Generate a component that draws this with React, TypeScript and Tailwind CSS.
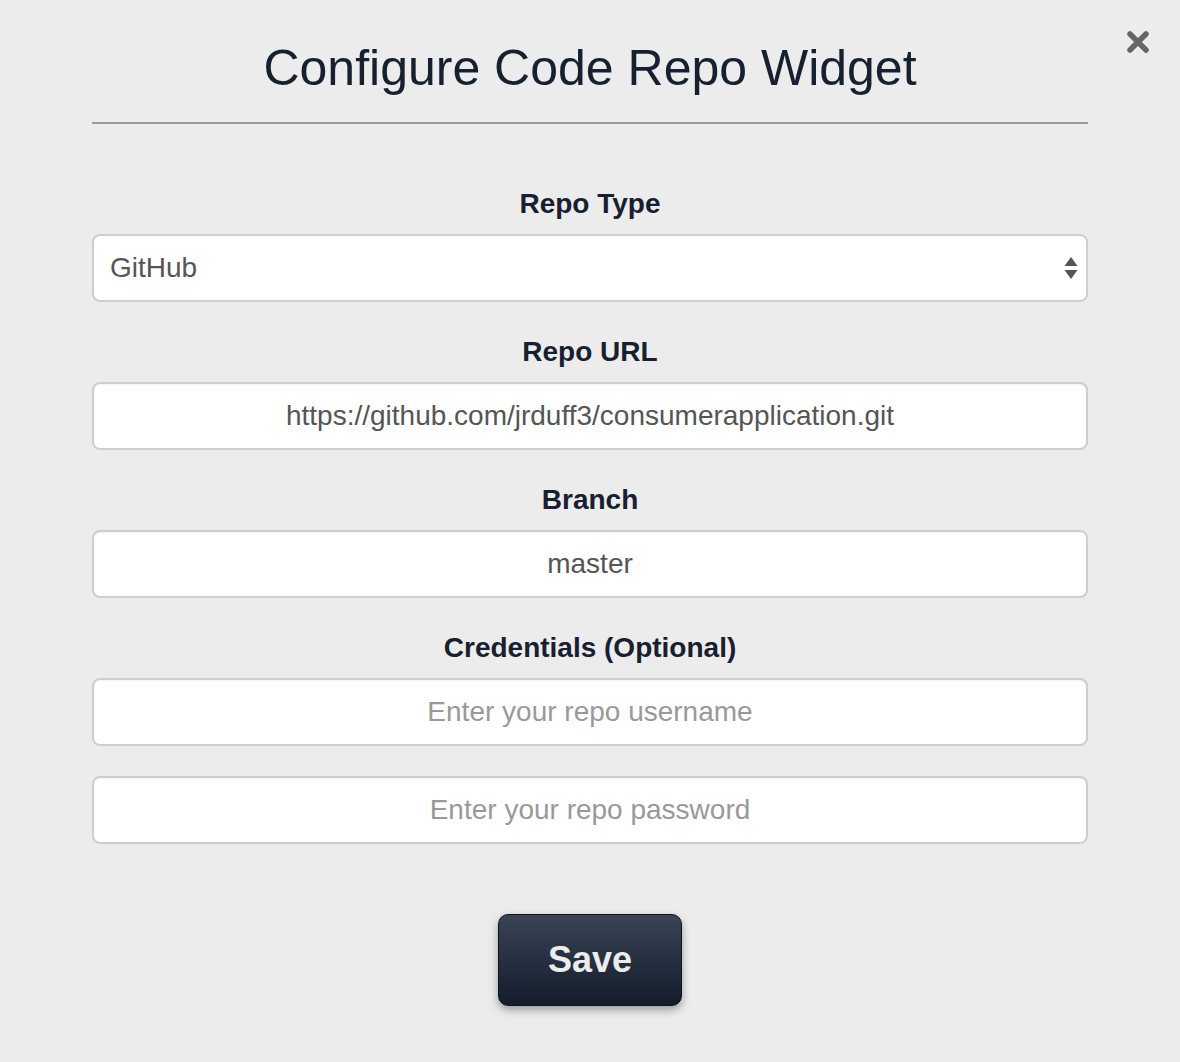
import React from "react";

const font = { fontFamily: '"Liberation Sans", Arial, Helvetica, sans-serif' };

function Label({ children, className = "" }: { children: React.ReactNode; className?: string }) {
  return (
    <div className={`text-center text-[28px] leading-[34px] font-bold text-[#172030] ${className}`}>{children}</div>
  );
}

function Field({ value, placeholder, type = "text" }: { value?: string; placeholder?: string; type?: string }) {
  return (
    <input
      type={type}
      defaultValue={value}
      placeholder={placeholder}
      className="block w-full h-[68px] rounded-[8px] border-2 border-[#cecece] bg-white text-center text-[28px] text-[#555] placeholder:text-[#999] outline-none shadow-[inset_0_1px_2px_rgba(0,0,0,0.06)]"
      style={font}
    />
  );
}

export default function App() {
  return (
    <div className="relative w-full h-[1062px] bg-[#ececec]" style={font}>
      <button className="absolute left-[1126px] top-[30px] w-[24px] h-[24px]" aria-label="Close">
        <svg viewBox="0 0 24 24" width="24" height="24">
          <path d="M4 4 L20 20 M20 4 L4 20" stroke="#666" strokeWidth="5.5" strokeLinecap="round" />
        </svg>
      </button>
      <div className="px-[92px]">
        <h1 className="pt-[40px] text-center text-[50px] leading-[56px] text-[#172030] font-normal">
          Configure Code Repo Widget
        </h1>
        <div className="mt-[26px] h-[2px] bg-[#9a9a9a]" />

        <Label className="mt-[63px]">Repo Type</Label>
        <div className="relative mt-[13px] h-[68px] rounded-[8px] border-2 border-[#cecece] bg-white flex items-center pl-[16px] text-[28px] text-[#555]">
          <span>GitHub</span>
          <svg className="absolute right-[8px] top-[20px]" width="14" height="24" viewBox="0 0 14 24">
            <path d="M7 1 L13.5 10 L0.5 10 Z" fill="#555" />
            <path d="M0.5 14 L13.5 14 L7 23 Z" fill="#555" />
          </svg>
        </div>

        <Label className="mt-[33px]">Repo URL</Label>
        <div className="mt-[13px]">
          <Field value="https://github.com/jrduff3/consumerapplication.git" />
        </div>

        <Label className="mt-[33px]">Branch</Label>
        <div className="mt-[13px]">
          <Field value="master" />
        </div>

        <Label className="mt-[33px]">Credentials (Optional)</Label>
        <div className="mt-[13px]">
          <Field placeholder="Enter your repo username" />
        </div>
        <div className="mt-[30px]">
          <Field placeholder="Enter your repo password" type="password" />
        </div>

        <div className="mt-[70px] flex justify-center">
          <button
            className="w-[184px] h-[92px] rounded-[10px] border border-[#0e1522] bg-gradient-to-b from-[#3b4455] to-[#141c2c] text-[36px] font-bold text-[#ececec] shadow-[0_4px_8px_rgba(0,0,0,0.35)]"
            style={font}
          >
            Save
          </button>
        </div>
      </div>
    </div>
  );
}
